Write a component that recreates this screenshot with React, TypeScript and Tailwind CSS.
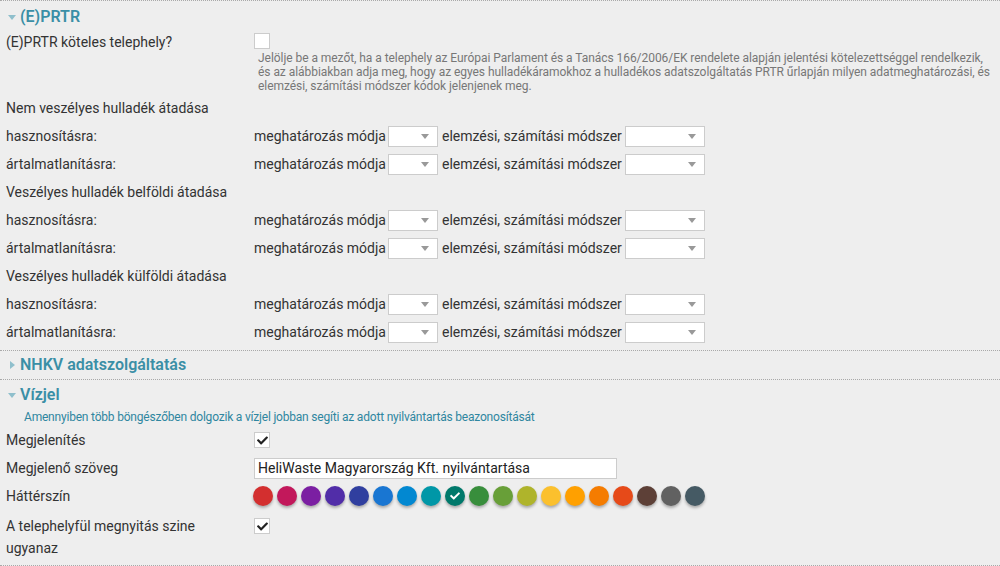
import { FaCheck } from "react-icons/fa"

const colors = [
    "#d32f2f", "#c2185b", "#7b1fa2", "#512da8", "#303f9f", "#1976d2", "#0288d1", "#0097a7", "#00796b",
    "#388e3c", "#689f38", "#afb42b", "#fbc02d", "#ffa000", "#f57c00", "#e64a19", "#5d4037", "#616161", "#455a64",
]

const Caret = ({ open }: { open: boolean }) => (
    <svg width="8" height="8" viewBox="0 0 8 8" className="mr-[4px]">
        {open ? <path d="M0 2 L8 2 L4 7 Z" fill="#8fbfcc" /> : <path d="M2 0 L7 4 L2 8 Z" fill="#8fbfcc" />}
    </svg>
)

const Header = ({ title, open, h }: { title: string; open: boolean; h: string }) => (
    <div className={`flex items-center pl-[8px] ${h}`}>
        <Caret open={open} />
        <span className="text-[16px] font-semibold text-[#3a8fa6]">{title}</span>
    </div>
)

const Checkbox = ({ checked }: { checked?: boolean }) => (
    <div className="w-[16px] h-[16px] bg-white border border-[#cccccc] flex items-center justify-center">
        {checked && <FaCheck className="text-[#222] text-[11px]" />}
    </div>
)

const Select = ({ w }: { w: string }) => (
    <div className={`${w} h-[21px] bg-white border border-[#cccccc] flex items-center justify-end pr-[8px]`}>
        <svg width="8" height="5" viewBox="0 0 8 5"><path d="M0 0 L8 0 L4 5 Z" fill="#999" /></svg>
    </div>
)

const MethodRow = ({ label }: { label: string }) => (
    <div className="grid grid-cols-[248px_1fr] h-[28px] items-center">
        <span>{label}</span>
        <div className="flex items-center">
            <span>meghatározás módja</span>
            <div className="ml-[2px]"><Select w="w-[50px]" /></div>
            <span className="ml-[4px]">elemzési, számítási módszer</span>
            <div className="ml-[3px]"><Select w="w-[80px]" /></div>
        </div>
    </div>
)

const Group = ({ title }: { title: string }) => (
    <>
        <div className="h-[28px] flex items-center">{title}</div>
        <MethodRow label="hasznosításra:" />
        <MethodRow label="ártalmatlanításra:" />
    </>
)

export default function App() {
    return (
        <div className="w-[1000px] h-[566px] overflow-hidden bg-[#eeeeee] text-[14px] text-[#333] font-['Roboto',sans-serif] leading-[20px]">
            <div className="border-t border-dotted border-[#a9a9a9]">
                <Header title="(E)PRTR" open h="h-[31px]" />
                <div className="pl-[6px] pb-[4px]">
                    <div className="grid grid-cols-[248px_1fr] h-[20px]">
                        <span>(E)PRTR köteles telephely?</span>
                        <div className="pt-[1px]"><Checkbox /></div>
                    </div>
                    <p className="ml-[252px] -mt-[1px] text-[12px] leading-[14px] text-[#777] whitespace-nowrap tracking-[-0.05px]">
                        Jelölje be a mezőt, ha a telephely az Európai Parlament és a Tanács 166/2006/EK rendelete alapján jelentési kötelezettséggel rendelkezik,<br />
                        és az alábbiakban adja meg, hogy az egyes hulladékáramokhoz a hulladékos adatszolgáltatás PRTR űrlapján milyen adatmeghatározási, és<br />
                        elemzési, számítási módszer kódok jelenjenek meg.
                    </p>
                    <div className="mt-[1px]">
                        <Group title="Nem veszélyes hulladék átadása" />
                        <Group title="Veszélyes hulladék belföldi átadása" />
                        <Group title="Veszélyes hulladék külföldi átadása" />
                    </div>
                </div>
            </div>
            <div className="border-t border-dotted border-[#a9a9a9]">
                <Header title="NHKV adatszolgáltatás" open={false} h="h-[28px]" />
            </div>
            <div className="border-t border-dotted border-[#a9a9a9] border-b">
                <Header title="Vízjel" open h="h-[30px]" />
                <p className="pl-[24px] text-[12px] leading-[14px] text-[#2f86a0] tracking-[-0.2px]">
                    Amennyiben több böngészőben dolgozik a vízjel jobban segíti az adott nyilvántartás beazonosítását
                </p>
                <div className="pl-[6px] pt-[2px] pb-[6px]">
                    <div className="grid grid-cols-[248px_1fr] h-[28px] items-center">
                        <span>Megjelenítés</span>
                        <Checkbox checked />
                    </div>
                    <div className="grid grid-cols-[248px_1fr] h-[28px] items-center">
                        <span>Megjelenő szöveg</span>
                        <div className="w-[363px] h-[21px] bg-white border border-[#cccccc] flex items-center px-[3px] text-[#222]">
                            HeliWaste Magyarország Kft. nyilvántartása
                        </div>
                    </div>
                    <div className="grid grid-cols-[248px_1fr] h-[28px] items-center">
                        <span>Háttérszín</span>
                        <div className="flex gap-[4px] -ml-[1px]">
                            {colors.map((c, i) => (
                                <div
                                    key={c}
                                    className="w-[20px] h-[20px] rounded-full flex items-center justify-center shadow-[0_2px_3px_rgba(0,0,0,0.3)]"
                                    style={{ backgroundColor: c }}
                                >
                                    {i === 8 && <FaCheck className="text-white text-[10px]" />}
                                </div>
                            ))}
                        </div>
                    </div>
                    <div className="grid grid-cols-[248px_1fr] mt-[5px] leading-[22px]">
                        <span>A telephelyfül megnyitás szine<br />ugyanaz</span>
                        <div className="pt-[3px]"><Checkbox checked /></div>
                    </div>
                </div>
            </div>
        </div>
    )
}
